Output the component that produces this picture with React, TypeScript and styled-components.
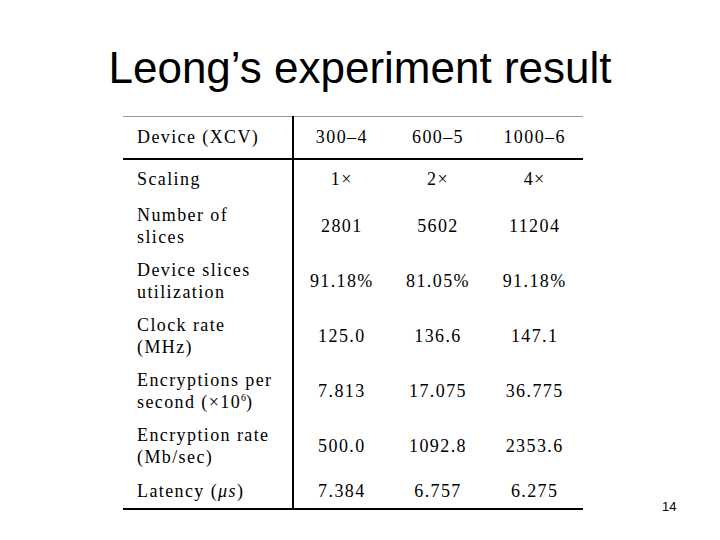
import React from "react";
import styled, { createGlobalStyle } from "styled-components";

const Global = createGlobalStyle`
  html, body { margin: 0; padding: 0; background: #fff; }
  body { width: 720px; height: 540px; overflow: hidden; }
`;

const Slide = styled.div`
  width: 720px;
  height: 540px;
  box-sizing: border-box;
  padding-top: 46px;
  display: flex;
  flex-direction: column;
`;

const Title = styled.h1`
  margin: 0;
  font-family: "Liberation Sans", Arial, sans-serif;
  font-weight: normal;
  font-size: 44px;
  line-height: 44px;
  color: #000;
  text-align: center;
`;

const Body = styled.div`
  margin-top: 26px;
  padding-left: 123px;
  display: flex;
  align-items: flex-end;
`;

const Table = styled.table`
  width: 460px;
  border-collapse: collapse;
  border-top: 1px solid #9a9a9a;
  border-bottom: 2px solid #000;
  font-family: "Liberation Serif", "DejaVu Serif", "Times New Roman", serif;
  font-size: 18px;
  letter-spacing: 1.4px;
  color: #000;
  table-layout: fixed;
`;

const Row = styled.tr<{ $h: number; $head?: boolean }>`
  height: ${(p) => p.$h}px;
  ${(p) => (p.$head ? "border-bottom: 2px solid #000;" : "")}
`;

const Label = styled.td`
  width: 155px;
  padding: 0 0 0 14px;
  border-right: 2px solid #000;
  line-height: 22px;
  text-align: left;
  vertical-align: middle;
  white-space: nowrap;
`;

const Val = styled.td`
  padding: 0;
  text-align: center;
  vertical-align: middle;
  line-height: 22px;
`;

const Sup = styled.sup`
  font-size: 10px;
  line-height: 0;
  letter-spacing: 0;
`;

const PageNum = styled.div`
  margin-left: 79px;
  margin-bottom: -4px;
  font-family: "Liberation Sans", Arial, sans-serif;
  font-size: 13px;
  color: #000;
`;

type R = { label: React.ReactNode; vals: string[]; h: number };

const rows: R[] = [
  { label: "Scaling", vals: ["1×", "2×", "4×"], h: 40 },
  { label: <>Number of<br />slices</>, vals: ["2801", "5602", "11204"], h: 55 },
  { label: <>Device slices<br />utilization</>, vals: ["91.18%", "81.05%", "91.18%"], h: 55 },
  { label: <>Clock rate<br />(MHz)</>, vals: ["125.0", "136.6", "147.1"], h: 55 },
  {
    label: <>Encryptions per<br />second (×10<Sup>6</Sup>)</>,
    vals: ["7.813", "17.075", "36.775"],
    h: 55,
  },
  { label: <>Encryption rate<br />(Mb/sec)</>, vals: ["500.0", "1092.8", "2353.6"], h: 55 },
  { label: <>Latency (<i>μs</i>)</>, vals: ["7.384", "6.757", "6.275"], h: 35 },
];

export default function App() {
  return (
    <>
      <Global />
      <Slide>
        <Title>Leong’s experiment result</Title>
        <Body>
          <Table>
            <tbody>
              <Row $h={42} $head>
                <Label>Device (XCV)</Label>
                <Val>300–4</Val>
                <Val>600–5</Val>
                <Val>1000–6</Val>
              </Row>
              {rows.map((r, i) => (
                <Row key={i} $h={r.h}>
                  <Label>{r.label}</Label>
                  {r.vals.map((v, j) => (
                    <Val key={j}>{v}</Val>
                  ))}
                </Row>
              ))}
            </tbody>
          </Table>
          <PageNum>14</PageNum>
        </Body>
      </Slide>
    </>
  );
}
